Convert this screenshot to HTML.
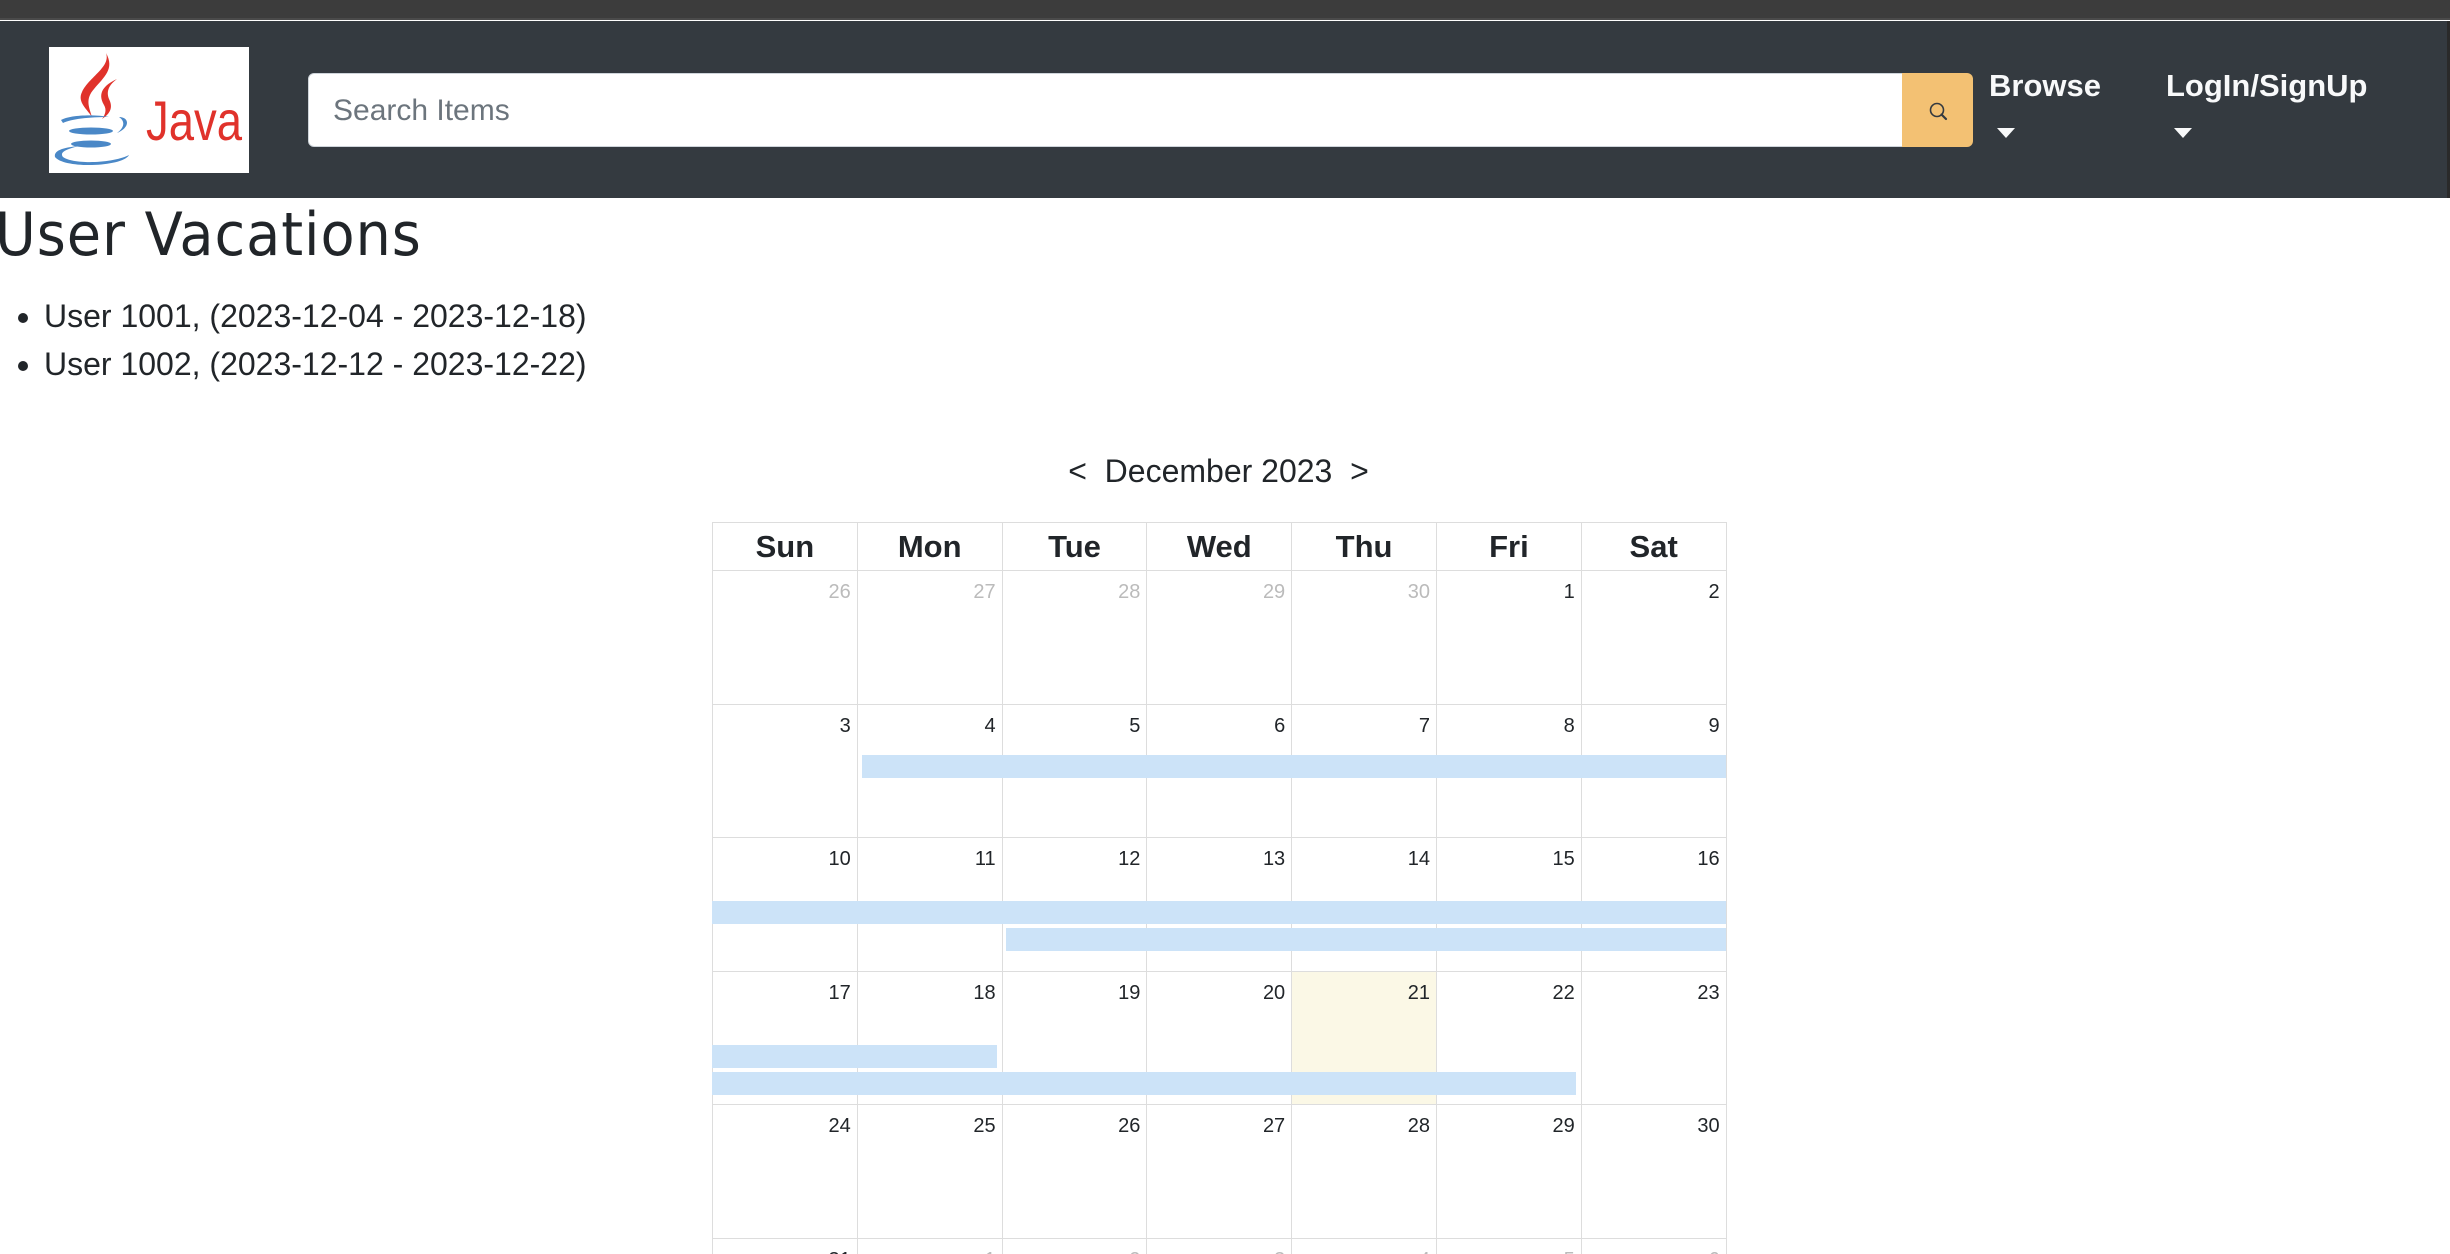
<!DOCTYPE html>
<html style="width:2450px;height:1254px;overflow:hidden"><head><meta charset="utf-8"><style>
*{margin:0;padding:0;box-sizing:border-box}
body{width:2450px;height:1254px;overflow:hidden;background:#fff;font-family:"Liberation Sans",sans-serif;color:#212529;position:relative}
.abs{position:absolute}
.top{left:0;top:0;width:2450px;height:20px;background:#3c3c3c;border-bottom:2px solid #4a4a4a}
.nav{left:0;top:21px;width:2450px;height:177px;background:#343a40}
.logo{left:49px;top:47px;width:200px;height:126px;background:#fff}
.search{left:308px;top:73px;width:1595px;height:74px;background:#fff;border-radius:6px 0 0 6px;border:1px solid #ced4da}
.search span{position:absolute;left:24px;top:20px;font-size:30px;color:#6c757d}
.btn{left:1902px;top:73px;width:71px;height:74px;background:#f3c173;border-radius:0 6px 6px 0}
.navt{color:#f8f9fa;font-weight:bold;font-size:31px;top:68px}
.caret{width:0;height:0;border-left:9px solid transparent;border-right:9px solid transparent;border-top:10px solid #f8f9fa;top:128px}
h1{position:absolute;left:-5px;top:200px;font-family:"DejaVu Sans",sans-serif;font-weight:normal;font-size:60px;letter-spacing:1px;transform:scaleX(0.93);transform-origin:left}
ul{position:absolute;left:44px;top:292px;font-size:32px;line-height:48px}
.mh{left:712px;width:1013px;top:453px;text-align:center;font-size:32px}
.clip{position:absolute;left:0;top:522px;width:2450px;height:732px;overflow:hidden}
table{position:absolute;left:712px;top:0;border-collapse:collapse;table-layout:fixed;width:1014px}
th,td{border:1.5px solid #ddd;width:144.8px}
th{height:48px;font-size:31px;font-weight:bold;text-align:center}
td{height:133.5px;vertical-align:top;text-align:right;font-size:20px;padding:10px 6px 0 0;color:#212529}
td.o{color:#bbb}
td.t{background:#fbf8e6}
.bar{position:absolute;background:#cce3f8;height:23px}
</style></head><body>
<div class="abs top"></div>
<div class="abs nav"></div>
<div class="abs logo">
<svg width="200" height="126" viewBox="0 0 200 126">
<path d="M57 6 C62 20 40 30 33 45 C28 55 38 62 43 70 C40 60 36 52 45 42 C55 30 66 22 57 6Z" fill="#e0322b"/>
<path d="M68 32 C55 38 48 46 55 58 C58 63 56 68 53 72 C62 66 64 60 60 52 C57 44 60 38 68 32Z" fill="#e0322b"/>
<path d="M12 73 C20 68 45 67 60 70 C40 70 22 72 14 76Z M70 70 C80 70 82 80 68 86 C76 80 76 74 70 70Z" fill="#4a88c7"/>
<ellipse cx="42" cy="84" rx="22" ry="3.5" fill="#4a88c7"/>
<ellipse cx="42" cy="97" rx="20" ry="3.5" fill="#4a88c7"/>
<path d="M6 110 C4 102 20 100 30 99 C18 102 10 105 14 110 C25 118 65 116 80 108 C74 120 15 122 6 110Z" fill="#4a88c7"/>
<text x="97" y="93" font-family="Liberation Sans Narrow,Liberation Sans,sans-serif" font-size="56" fill="#e0322b" textLength="96" lengthAdjust="spacingAndGlyphs">Java</text>
</svg></div>
<div class="abs search"><span>Search Items</span></div>
<div class="abs btn"><svg class="abs" style="left:26px;top:28px" width="22" height="22" viewBox="0 0 22 22"><circle cx="9" cy="9" r="6.5" fill="none" stroke="#343a40" stroke-width="1.6"/><path d="M13.5 13.5 L18 18" stroke="#343a40" stroke-width="2.2" stroke-linecap="round"/></svg></div>
<div class="abs navt" style="left:1989px">Browse</div>
<div class="abs caret" style="left:1997px"></div>
<div class="abs navt" style="left:2166px">LogIn/SignUp</div>
<div class="abs caret" style="left:2174px"></div>
<h1>User Vacations</h1>
<ul><li>User 1001, (2023-12-04 - 2023-12-18)</li><li>User 1002, (2023-12-12 - 2023-12-22)</li></ul>
<div class="abs mh">&lt;&nbsp;&nbsp;December 2023&nbsp;&nbsp;&gt;</div>
<div class="clip">
<table>
<tr><th>Sun</th><th>Mon</th><th>Tue</th><th>Wed</th><th>Thu</th><th>Fri</th><th>Sat</th></tr>
<tr><td class="o">26</td><td class="o">27</td><td class="o">28</td><td class="o">29</td><td class="o">30</td><td>1</td><td>2</td></tr>
<tr><td>3</td><td>4</td><td>5</td><td>6</td><td>7</td><td>8</td><td>9</td></tr>
<tr><td>10</td><td>11</td><td>12</td><td>13</td><td>14</td><td>15</td><td>16</td></tr>
<tr><td>17</td><td>18</td><td>19</td><td>20</td><td class="t">21</td><td>22</td><td>23</td></tr>
<tr><td>24</td><td>25</td><td>26</td><td>27</td><td>28</td><td>29</td><td>30</td></tr>
<tr><td>31</td><td class="o">1</td><td class="o">2</td><td class="o">3</td><td class="o">4</td><td class="o">5</td><td class="o">6</td></tr>
</table>
</div>
<div class="bar" style="left:862px;top:755px;width:864px"></div>
<div class="bar" style="left:712px;top:901px;width:1014px"></div>
<div class="bar" style="left:1006px;top:928px;width:720px"></div>
<div class="bar" style="left:712px;top:1045px;width:285px"></div>
<div class="bar" style="left:712px;top:1072px;width:864px"></div>
<div class="abs" style="left:2447px;top:21px;width:3px;height:177px;background:#2a2a2a"></div>
</body></html>
